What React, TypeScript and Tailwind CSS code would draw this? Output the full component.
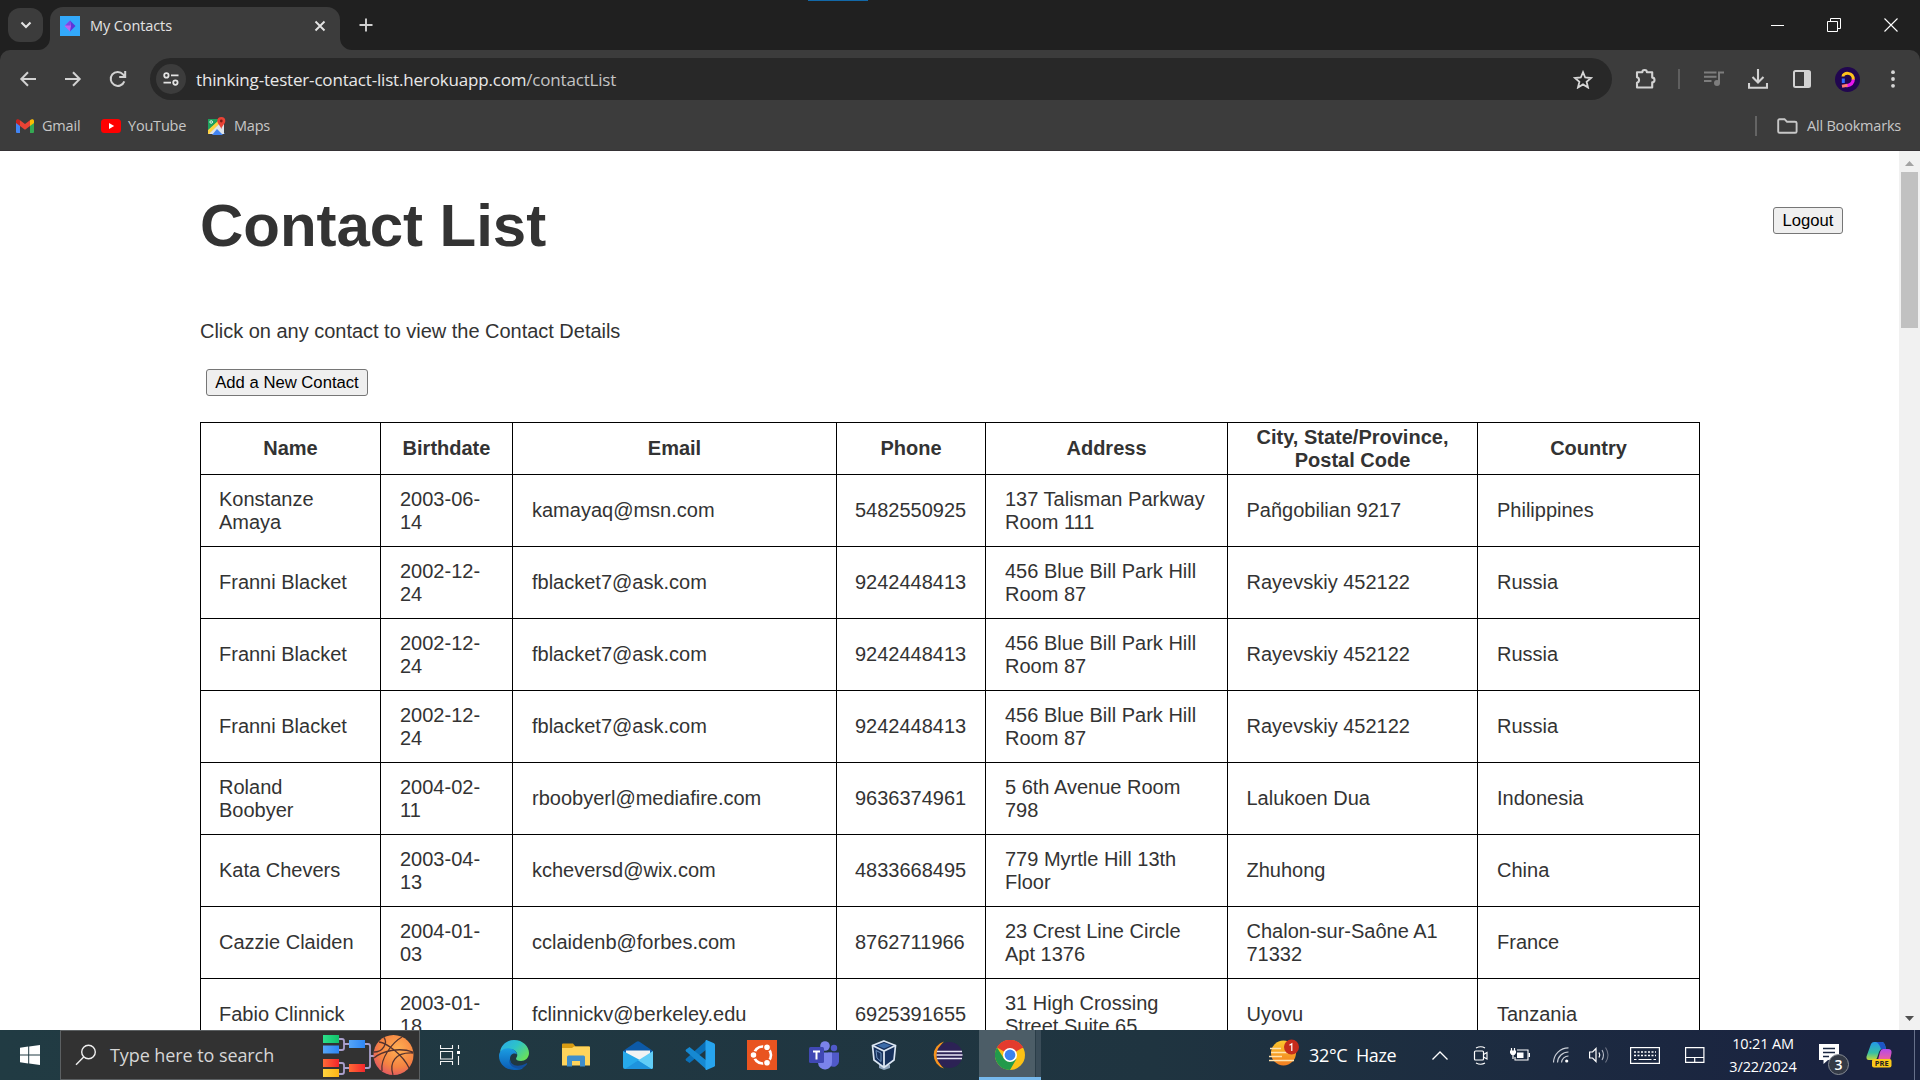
import React from "react";

const ui = "font-['Open_Sans','Noto_Sans',sans-serif]";

type SvgProps = { w: number; h: number; vb?: string; children: React.ReactNode; className?: string };
const Svg = ({ w, h, vb, children, className }: SvgProps) => (
  <svg width={w} height={h} viewBox={vb ?? `0 0 ${w} ${h}`} fill="none" className={`block shrink-0 ${className ?? ""}`}>
    {children}
  </svg>
);

const contacts = [
  ["Konstanze Amaya", "2003-06-14", "kamayaq@msn.com", "5482550925", "137 Talisman Parkway Room 111", "Pañgobilian 9217", "Philippines"],
  ["Franni Blacket", "2002-12-24", "fblacket7@ask.com", "9242448413", "456 Blue Bill Park Hill Room 87", "Rayevskiy 452122", "Russia"],
  ["Franni Blacket", "2002-12-24", "fblacket7@ask.com", "9242448413", "456 Blue Bill Park Hill Room 87", "Rayevskiy 452122", "Russia"],
  ["Franni Blacket", "2002-12-24", "fblacket7@ask.com", "9242448413", "456 Blue Bill Park Hill Room 87", "Rayevskiy 452122", "Russia"],
  ["Roland Boobyer", "2004-02-11", "rboobyerl@mediafire.com", "9636374961", "5 6th Avenue Room 798", "Lalukoen Dua", "Indonesia"],
  ["Kata Chevers", "2003-04-13", "kcheversd@wix.com", "4833668495", "779 Myrtle Hill 13th Floor", "Zhuhong", "China"],
  ["Cazzie Claiden", "2004-01-03", "cclaidenb@forbes.com", "8762711966", "23 Crest Line Circle Apt 1376", "Chalon-sur-Saône A1 71332", "France"],
  ["Fabio Clinnick", "2003-01-18", "fclinnickv@berkeley.edu", "6925391655", "31 High Crossing Street Suite 65", "Uyovu", "Tanzania"],
];
const headers = ["Name", "Birthdate", "Email", "Phone", "Address", "City, State/Province, Postal Code", "Country"];

function TitleBar() {
  return (
    <div className="flex h-[50px] bg-[#202020]">
      <div className="flex w-[50px] items-center pl-2">
        <div className="flex h-[34px] w-[35px] items-center justify-center rounded-xl bg-[#3c3c3c]">
          <Svg w={12} h={8}><path d="M1.5 1.5 6 6l4.500-4.500" stroke="#e3e3e3" strokeWidth="2.100" /></Svg>
        </div>
      </div>
      <div className="relative mt-[7px] flex h-[43px] w-[290px] items-center rounded-t-[13px] bg-[#3c3c3c] pb-[5px]">
        <Svg w={12} h={12} className="absolute -left-3 bottom-0"><path d="M0 12A12 12 0 0 0 12 0V12Z" fill="#3c3c3c" /></Svg>
        <Svg w={12} h={12} className="absolute -right-3 bottom-0"><path d="M12 12A12 12 0 0 1 0 0V12Z" fill="#3c3c3c" /></Svg>
        <Svg w={20} h={20} className="ml-[10px]">
          <rect width="20" height="20" fill="#33a9fb" />
          <path d="M10 4.500 15.500 10 10 15.500Z" fill="#5b35d8" />
          <path d="M10 4.500 4.500 10l5.500 5.500 1-5.500Z" fill="#c060f0" />
          <path d="M10 4.500 5 9.500h5.500Z" fill="#7a48e6" />
        </Svg>
        <span className="ml-[10px] w-[228px] text-[14.500px] leading-5 tracking-[-0.1px] whitespace-nowrap text-[#e3e3e3]">My Contacts</span>
        <Svg w={12} h={12} className="-ml-[4px]"><path d="M1.500 1.500l9 9m0-9-9 9" stroke="#e3e3e3" strokeWidth="1.900" /></Svg>
      </div>
      <div className="flex w-[51px] items-center justify-center">
        <Svg w={14} h={14}><path d="M7 .5v13M.5 7h13" stroke="#d0d0d0" strokeWidth="1.900" /></Svg>
      </div>
      <div className="ml-[417px] h-px w-[60px] bg-[#1268a8]" />
      <div className="ml-auto flex h-[50px] items-center pr-px">
        <div className="flex w-[56px] justify-center"><Svg w={13} h={14}><path d="M0 7.500h13" stroke="#fff" /></Svg></div>
        <div className="flex w-[57px] justify-center"><Svg w={14} h={14}><path d="M.5 3.500h10v10H.5zM3.500 3V.5h10v10H11" stroke="#fff" /></Svg></div>
        <div className="flex w-[57px] justify-center"><Svg w={14} h={14}><path d="m.5.5 13 13m0-13-13 13" stroke="#fff" strokeWidth="1.100" /></Svg></div>
      </div>
    </div>
  );
}

function Toolbar() {
  return (
    <div className="bg-[#202020]">
      <div className="flex h-[58px] items-center rounded-t-[10px] bg-[#3c3c3c]">
        <div className="flex w-[150px] items-center pl-[19px]">
          <Svg w={18} h={16}><path d="M9 1.200 2.300 8 9 14.800M2.300 8H17" stroke="#d2d2d2" strokeWidth="2" /></Svg>
          <Svg w={18} h={16} className="ml-[27px]"><path d="M9 1.200 15.700 8 9 14.800M15.700 8H1" stroke="#d2d2d2" strokeWidth="2" /></Svg>
          <Svg w={18} h={18} className="ml-[27px]"><path d="M15.300 11.300A7 7 0 1 1 14 4.300L16 6.500M16.200 1v6h-6" stroke="#d2d2d2" strokeWidth="2" /></Svg>
        </div>
        <div className="flex h-[42px] w-[1462px] items-center rounded-full bg-[#282828] pr-[19px] pl-[6px]">
          <div className="flex size-[30px] items-center justify-center rounded-full bg-[#3c3c3c]">
            <Svg w={16} h={14}>
              <circle cx="3.400" cy="3.400" r="2.200" stroke="#e3e3e3" strokeWidth="1.800" />
              <circle cx="12.400" cy="10.600" r="2.200" stroke="#e3e3e3" strokeWidth="1.800" />
              <path d="M8 3.400h7.500M.5 10.600H8" stroke="#e3e3e3" strokeWidth="1.900" />
            </Svg>
          </div>
          <span className="mt-px ml-[10px] text-[17px] tracking-[-0.18px] whitespace-nowrap text-[#e8e8e8]">thinking-tester-contact-list.herokuapp.com<span className="text-[#c4c4c4]">/contactList</span></span>
          <Svg w={20} h={19} className="ml-auto">
            <path d="m10 2.200 2.200 5.300 5.800.5-4.400 3.800 1.400 5.700-5-3.100-5 3.100 1.400-5.700L2 8l5.800-.5Z" stroke="#d6d6d6" strokeWidth="1.800" />
          </Svg>
        </div>
        <div className="flex w-[68px] justify-center">
          <Svg w={22} h={22}><path d="M2 4.300h5.300a2.300 2.300 0 0 1 4.600 0h5.300v5.300a2.300 2.300 0 0 1 0 4.600v5.300H2v-4.800a2.800 2.800 0 0 0 0-5.400Z" stroke="#d2d2d2" strokeWidth="2.100" strokeLinejoin="round" /></Svg>
        </div>
        <div className="-ml-[2px] h-5 w-[1.500px] bg-[#5f5f5f]" />
        <div className="ml-[12px] flex w-[44px] justify-center">
          <Svg w={20} h={16}><path d="M0 1.500h12.500M0 5.700h12.500M0 10h7.500" stroke="#7d7d7d" strokeWidth="1.900" /><circle cx="13" cy="12" r="3" fill="#7d7d7d" /><path d="M15 12V1.500h5" stroke="#7d7d7d" strokeWidth="2" /></Svg>
        </div>
        <div className="flex w-[44px] justify-center">
          <Svg w={20} h={20}><path d="M10 0v13M4.500 8l5.500 5.500L15.500 8M1 14v4.800h18V14" stroke="#d2d2d2" strokeWidth="2.100" /></Svg>
        </div>
        <div className="flex w-[45px] justify-center">
          <Svg w={18} h={18}><rect x="1" y="1" width="16" height="16" rx="1.500" stroke="#d2d2d2" strokeWidth="2" /><path d="M11 1h6v16h-6z" fill="#d2d2d2" /></Svg>
        </div>
        <div className="flex w-[45px] justify-center">
          <Svg w={25} h={25}>
            <circle cx="12.500" cy="12.500" r="12.500" fill="#21064f" />
            <path d="M8.300 11.500V16" stroke="#2f67ff" strokeWidth="3" />
            <path d="M18.300 12c0 4-3 6.300-7 6.800" stroke="#e815ef" strokeWidth="3.200" />
            <path d="M8 9.500c0-4.500 10.300-4.800 10.300 3" stroke="#ffc21c" strokeWidth="3" /><path d="M7 19.200l5.500-1" stroke="#ff7c70" strokeWidth="3" />
          </Svg>
        </div>
        <div className="flex w-[46px] justify-center">
          <Svg w={4} h={18}><circle cx="2" cy="2.200" r="1.900" fill="#d6d6d6" /><circle cx="2" cy="9" r="1.900" fill="#d6d6d6" /><circle cx="2" cy="15.800" r="1.900" fill="#d6d6d6" /></Svg>
        </div>
      </div>
    </div>
  );
}

function Bookmarks() {
  return (
    <div className="flex h-[43px] items-center border-b border-[#353235] bg-[#3c3c3c] pb-[7px] pl-4 text-[14.500px] tracking-[-0.2px] text-[#c7c7c7]">
      <Svg w={18} h={14}>
        <path d="M0 2.500V13a1 1 0 0 0 1 1h3V5Z" fill="#4285f4" /><path d="M18 2.500V13a1 1 0 0 1-1 1h-3V5Z" fill="#34a853" />
        <path d="M14 1.200V7l4-3V2c0-2-2.200-2.500-4-.8Z" fill="#fbbc04" /><path d="M0 2v2l4 3V1.200C2.200-.5 0 0 0 2Z" fill="#c5221f" /><path d="M4 1.200 9 5l5-3.800V7L9 10.800 4 7Z" fill="#ea4335" />
      </Svg>
      <span className="ml-[8px] w-[59px] whitespace-nowrap">Gmail</span>
      <Svg w={20} h={14}><rect width="20" height="14" rx="3.500" fill="#f00" /><path d="m8 4 5.200 3L8 10Z" fill="#fff" /></Svg>
      <span className="ml-[7px] w-[80px] whitespace-nowrap">YouTube</span>
      <Svg w={18} h={18}>
        <path d="M0 2h12v15H0z" fill="#1fa15d" /><path d="M1 17 9 8.500l8 8.500Z" fill="#4b87f0" /><path d="M0 17 16 2v15Z" fill="#dfe3e8" /><path d="m4 18 5-6 6 6Z" fill="#4285f4" />
        <path d="M0 12.500 10.500 3H12v3L1 17H0Z" fill="#ffd23f" /><path d="M0 2h12L0 13Z" fill="#1fa15d" /><path d="M13.300 0a4 4 0 0 1 4 4c0 2.800-2.800 4-4 8-1.200-4-4-5.200-4-8a4 4 0 0 1 4-4Z" fill="#ea4335" /><circle cx="13.300" cy="4" r="1.400" fill="#7e1d16" /><circle cx="3.200" cy="5" r="1.300" stroke="#e8f5ee" />
      </Svg>
      <span className="ml-[8px] whitespace-nowrap">Maps</span>
      <div className="ml-auto h-5 w-[2px] bg-[#646464]" />
      <Svg w={21} h={16} className="ml-5"><path d="M1.200 2.500c0-.8.500-1.300 1.300-1.300h5l2.500 2.500h8c1 0 1.600.6 1.600 1.400v8.300c0 .8-.6 1.400-1.400 1.400H2.600c-.8 0-1.400-.6-1.400-1.400Z" stroke="#c7c7c7" strokeWidth="1.900" /></Svg>
      <span className="mr-[18px] ml-[9px] w-[95px] whitespace-nowrap">All Bookmarks</span>
    </div>
  );
}

const btn = "h-[27px] rounded-[3px] border border-[#767676] bg-[#efefef] text-center text-[16.667px] leading-[25px] text-black whitespace-nowrap";

// Left padding of each table column
const cellPad = ["pl-[18px]", "pl-[19px]", "pl-[19px]", "pl-[18px]", "pl-[19px]", "pl-[18.500px]", "pl-[19px]"];

function Page() {
  return (
    <div className="flex h-[879px] overflow-hidden bg-white font-['Liberation_Sans',Arial,sans-serif] text-[#333]">
      <main className="flex-1 pl-[200px]">
        <div className="flex items-start justify-between pr-[56px]">
          <h1 className="mt-[40px] text-[60px] leading-[69px] font-bold tracking-[-0.05px]">Contact List</h1>
          <button className={`${btn} mt-[56px] w-[70px]`}>Logout</button>
        </div>
        <p className="mt-[60px] text-[20px] leading-[23px] tracking-[-0.02px]">Click on any contact to view the Contact Details</p>
        <button className={`${btn} mt-[26px] ml-[6px] block w-[162px]`}>Add a New Contact</button>
        <table className="mt-[26px] w-[1500px] table-fixed border-separate border-spacing-0 border-r border-black text-[20px] leading-[23px]">
          <colgroup>
            <col className="w-[180px]" /><col className="w-[132px]" /><col className="w-[324px]" /><col className="w-[149px]" /><col className="w-[242px]" /><col className="w-[250px]" /><col className="w-[222px]" />
          </colgroup>
          <thead>
            <tr className="h-[52px]">
              {headers.map((h) => <th key={h} className="border-t border-l border-black px-[18px] py-0 text-center align-middle font-bold">{h}</th>)}
            </tr>
          </thead>
          <tbody>
            {contacts.map((row, i) => (
              <tr key={i} className="h-[72px]">
                {row.map((c, j) => <td key={j} className={`border-t border-l border-black py-0 pr-[19px] align-middle ${cellPad[j]}`}>{c}</td>)}
              </tr>
            ))}
          </tbody>
        </table>
      </main>
      <div className="flex w-[21px] flex-col items-center bg-[#f1f1f1]">
        <Svg w={9} h={5} className="mt-[10px]"><path d="M4.500 0 9 5H0Z" fill="#a3a3a3" /></Svg>
        <div className="mt-[6px] h-[156px] w-[17px] bg-[#c1c1c1]" />
        <Svg w={9} h={5} className="mt-auto mb-[9px]"><path d="M4.500 5 9 0H0Z" fill="#505050" /></Svg>
      </div>
    </div>
  );
}

const Cell = ({ children, className }: { children: React.ReactNode; className?: string }) => (
  <div className={`flex h-[50px] w-[62px] shrink-0 items-center justify-center ${className ?? ""}`}>{children}</div>
);

function SearchBox() {
  return (
    <div className="flex h-[50px] w-[360px] items-center border border-[#5c6062] bg-[#323232]">
      <Svg w={22} h={22} className="ml-[14px]"><circle cx="13.500" cy="8" r="6.800" stroke="#f0f0f0" strokeWidth="1.400" /><path d="M8.700 13 1 20.700" stroke="#f0f0f0" strokeWidth="1.400" /></Svg>
      <span className="ml-[13px] w-[212px] text-[18px] tracking-[-0.08px] whitespace-nowrap text-[#d6d6d6]">Type here to search</span>
      <Svg w={92} h={44}>
        <defs>
          <radialGradient id="ball" cx=".6" cy=".35" r=".75"><stop offset="0" stopColor="#ffb052" /><stop offset=".6" stopColor="#f58342" /><stop offset="1" stopColor="#dd4f68" /></radialGradient>
          <linearGradient id="gr"><stop stopColor="#2be08a" /><stop offset="1" stopColor="#12c06a" /></linearGradient>
          <linearGradient id="bl"><stop stopColor="#55a5f7" /><stop offset="1" stopColor="#2d86f4" /></linearGradient>
          <linearGradient id="rd"><stop stopColor="#ff6a36" /><stop offset="1" stopColor="#f3262c" /></linearGradient>
          <linearGradient id="ye"><stop stopColor="#ffd33f" /><stop offset="1" stopColor="#fbb416" /></linearGradient>
        </defs>
        <path d="M17 6h3q2 0 2 2v7q0 2-2 2h-3M22 11h5M17 30h3q2 0 2 2v7q0 2-2 2h-3M22 35h5M43 11h3q2 0 2 2v20q0 2-2 2h-3M48 23h7" stroke="#a99fcb" strokeWidth="1.800" />
        <rect x="1" y="2" width="16" height="8" fill="url(#gr)" /><rect x="1" y="12.500" width="16" height="8" fill="url(#bl)" />
        <rect x="27" y="7" width="16" height="8" fill="url(#bl)" /><rect x="1" y="26" width="16" height="8" fill="url(#rd)" />
        <rect x="27" y="31" width="16" height="8" fill="url(#rd)" /><rect x="1" y="36" width="16" height="8" fill="url(#ye)" />
        <circle cx="71.500" cy="22" r="20" fill="url(#ball)" />
        <path d="M62 4.500C66 10 61 19 52 19M57 9c8 1 24 13 30 26M52 25c8-7 25-11 39-6M80 4c-9 5-22 21-20 34M71 42c-4-12 2-23 20-22" stroke="#54322e" strokeWidth="1.300" />
      </Svg>
    </div>
  );
}

function TaskIcons() {
  return (
    <div className="flex">
      <Cell>
        <Svg w={30} h={30}>
          <defs>
            <linearGradient id="e1" x1="0" y1="0" x2="1" y2=".7"><stop stopColor="#2ba7ea" /><stop offset=".5" stopColor="#2dc3c9" /><stop offset="1" stopColor="#69e05a" /></linearGradient>
            <linearGradient id="e2" x1="0" y1="0" x2="0" y2="1"><stop stopColor="#1b9de2" /><stop offset="1" stopColor="#0b5cb5" /></linearGradient>
          </defs>
          <path d="M1 12C2 5 8 0 15 0c9 0 15 6.500 15 13 0 5-4 8-8 8-5 0-5.500-2-4.500-3.500C20 13.500 16 9 11 9c-4 0-8 1.500-10 3Z" fill="url(#e1)" />
          <path d="M0 16C0 11 5 7.500 11 8.500c4 .5 6.500 3 7 6-2-2-7-1-7 4.500 0 6 6 10 12 8.500 1 0 1.500 0 1 .5C22 30 18.500 30 15 30 7 30 0 24 0 16Z" fill="url(#e2)" />
          <path d="M11 19c0 6 7 9 16 4.500 1-.5 1.500 0 1 .7C26 27 23 28.500 20 28.800 12 28 9 23 11 19Z" fill="#134f9d" />
        </Svg>
      </Cell>
      <Cell>
        <Svg w={28} h={24}><path d="M0 1.500Q0 .5 1 .5h10l2.500 3H27q1 0 1 1V22H0Z" fill="#d99c12" /><path d="M0 5h10l2-1.500h15q1 0 1 1V22.500H0Z" fill="#ffd45b" /><path d="M5 23.500V14q0-1.500 1.500-1.500h15q1.500 0 1.500 1.500v9.500h-5V18h-8v5.500Z" fill="#3f8ecb" /></Svg>
      </Cell>
      <Cell>
        <Svg w={30} h={28}><path d="M0 10 13.500.8q1.500-1 3 0L30 10v6H0Z" fill="#0d5aa8" /><path d="M3 9.500h24v10H3z" fill="#f3f3f3" /><path d="M0 10v16q0 2 2 2h26q2 0 2-2Z" fill="#27a9ea" /><path d="M30 10 15 19.500 28.500 28q1.500 0 1.500-2Z" fill="#61cdf7" /><path d="m15 19.500 13.500 8.500H2Z" fill="#1e93dc" /></Svg>
      </Cell>
      <Cell>
        <Svg w={30} h={30}><path d="M22 0v9L4.500 23 1 20.500q-1-.8 0-1.800Z" fill="#0a70b8" /><path d="M22 30v-9L4.500 7 1 9.500q-1 .8 0 1.800Z" fill="#1689d2" /><path d="M21.500 0 29 3.200q1 .5 1 1.500v20.600q0 1-1 1.500L21.500 30c-.8 0-1-.5-1-1V1q0-1 1-1Z" fill="#27a4ee" /></Svg>
      </Cell>
      <Cell>
        <Svg w={30} h={30}><rect width="30" height="30" fill="#e95420" /><circle cx="15.500" cy="15" r="8.500" stroke="#fff" strokeWidth="2.600" />{[[6.500, 15], [20, 7.300], [20, 22.700]].map(([x, y]) => <circle key={y} cx={x} cy={y} r="3.400" fill="#fff" stroke="#e95420" strokeWidth="1.200" />)}</Svg>
      </Cell>
      <Cell>
        <Svg w={30} h={30}><circle cx="25" cy="8" r="3.200" fill="#5059c9" /><path d="M19 12.500h11V21a5.500 5.500 0 0 1-9 4.500Z" fill="#5059c9" /><circle cx="16" cy="6" r="4.800" fill="#7b83eb" /><path d="M9 12.500h14V22a7 7 0 0 1-14 1Z" fill="#7b83eb" /><rect y="7" width="15" height="16" rx="1.500" fill="#4048b4" /><path d="M4 11.500h7M7.500 11.500v8" stroke="#fff" strokeWidth="2" /></Svg>
      </Cell>
      <Cell className="pr-[4px]">
        <Svg w={26} h={30}><path d="M8 25 12 22l7 3v3l-6 2-5-2Z" fill="#8fa4bd" /><path d="M13 1 24.500 5.500 23 20l-10 7.500L3 20 1.500 5.500Z" fill="#17315c" stroke="#dbe6f2" strokeWidth="1.700" /><path d="M1.500 5.500 13 11l11.500-5.500M13 11v16" stroke="#dbe6f2" strokeWidth="1.800" /><path d="M6 5.500 13 3l7 2.500-7 3Z" fill="#3b6ba8" /><path d="M5 10.500 10 13v8.500L6 18Z" stroke="#6f93bf" /></Svg>
      </Cell>
      <Cell>
        <Svg w={30} h={30}><path d="M11 1.500a14 14 0 0 0 0 27A18 18 0 0 1 11 1.500Z" fill="#f7941e" /><circle cx="16.500" cy="15" r="13" fill="#2c2255" /><path d="M4 11.500h25M3.500 15h26M4 18.500h25" stroke="#e9e6f5" strokeWidth="1.700" /></Svg>
      </Cell>
      <div className="flex h-[50px] w-[62px] border-b-[3px] border-[#76b9ed]">
        <div className="flex w-[57px] items-center justify-center border-r border-[#2a3d48] bg-[#4c5d67] pt-[3px] pl-[5px]">
          <Svg w={30} h={30}><circle cx="15" cy="15" r="15" fill="#fbc116" /><path d="M15 15 2 7.500A15 15 0 0 1 28 7.500Z" fill="#e33b2e" /><path d="M15 8h13.300A15 15 0 0 0 2 7.500Z" fill="#e33b2e" /><path d="M2 7.500a15 15 0 0 0 13 22.500l6.500-11.300L15 22 8.900 18.500Z" fill="#229a4b" /><circle cx="15" cy="15" r="7" fill="#fff" /><circle cx="15" cy="15" r="5.400" fill="#3b82f0" /></Svg>
        </div>
        <div className="flex-1 bg-[#3a4c58]" />
      </div>
    </div>
  );
}

function Taskbar() {
  return (
    <div className="flex h-[50px] items-center bg-linear-to-r from-[#213b43] from-0% via-[#1f3440] via-60% to-[#1a2340] to-95% text-white">
      <div className="flex w-[60px] justify-center">
        <Svg w={20} h={20}><path d="M0 2.700 8.200 1.600v7.900H0ZM9.200 1.500 20 0v9.500H9.200ZM0 10.500h8.200v7.900L0 17.300ZM9.200 10.500H20V20L9.200 18.500Z" fill="#fff" /></Svg>
      </div>
      <SearchBox />
      <div className="flex w-[63px] pl-5">
        <Svg w={21} h={20}><path d="M.5 0v3.500h12V0M.5 20v-3.500h12V20M.5 6.500h12v7.500H.5ZM18.500 0v4M18.500 11v9" stroke="#f2f2f2" strokeWidth="1.100" /><rect x="17" y="6" width="3" height="3" fill="#fff" /></Svg>
      </div>
      <TaskIcons />
      <div className="flex flex-1 items-center pl-[228px]">
        <Svg w={30} h={30} className="-mt-[4px]">
          <defs><linearGradient id="sun" x1="0" y1="0" x2="0" y2="1"><stop stopColor="#fbc62c" /><stop offset="1" stopColor="#f27e22" /></linearGradient></defs>
          <circle cx="14.500" cy="15" r="12.500" fill="url(#sun)" /><path d="M1 10.500h11M2 14.500h17M0 18.500h13M0 22.500h25" stroke="#ffe2ad" strokeWidth="1.500" />
          <circle cx="22.500" cy="9" r="7.500" fill="#c42b1c" /><path d="m20.500 7.300 2.300-1.500V13" stroke="#fff" strokeWidth="1.200" />
        </Svg>
        <span className="ml-[10px] w-[117px] text-[18px] tracking-[-0.35px] whitespace-pre">32°C  Haze</span>
        <Svg w={16} h={9} className="ml-[6px]"><path d="m.5 8.500 7.500-7.500 7.500 7.500" stroke="#fff" strokeWidth="1.300" /></Svg>
        <Svg w={16} h={19} className="ml-[25px]"><rect x="1.500" y="5" width="9" height="9" rx="1" stroke="#fff" strokeWidth="1.200" /><path d="m10.500 8.500 3.500-2v6.500l-3.500-2M3 2Q8-.5 12 2M3 17q5 2.500 9 0" stroke="#fff" strokeWidth="1.100" /></Svg>
        <Svg w={21} h={14} className="ml-[21px]"><path d="M7 2h11v10H5V9" stroke="#fff" strokeWidth="1.100" /><path d="M7 4.500h6.500v5.500H7zM18.500 5H20v4h-1.500z" fill="#fff" /><path d="M1.500 0v3M4.500 0v3M3 6v5" stroke="#fff" strokeWidth="1.200" /><path d="M0 2.500h6V5L4.500 7h-3L0 5Z" fill="#fff" /></Svg>
        <Svg w={16} h={16} className="ml-[22px]"><path d="M.5 15.500A15 15 0 0 1 15.500.8M4.500 15.500a11 11 0 0 1 11-10.500M8.500 15.500a7 7 0 0 1 7-6.500" stroke="#c9ced6" strokeWidth="1.200" /><circle cx="13.700" cy="14" r="1.600" fill="#fff" /></Svg>
        <Svg w={21} h={18} className="ml-[20px]"><path d="M.6 6h3L7 2.500v13L3.600 12h-3Z" stroke="#fff" strokeWidth="1.200" /><path d="M10 6.500q1.500 2.500 0 5" stroke="#fff" strokeWidth="1.200" /><path d="M13 4q3 5 0 10" stroke="#b7bcc8" strokeWidth="1.100" /><path d="M16.500 1.500q5 7.500 0 15" stroke="#6d7486" strokeWidth="1.100" /></Svg>
        <Svg w={30} h={17} className="ml-[20px]"><rect x=".6" y=".6" width="28.800" height="15.800" stroke="#fff" strokeWidth="1.200" /><path d="M4 5h22M4 8.500h22" stroke="#fff" strokeWidth="1.500" strokeDasharray="2 1.500" /><path d="M4 12.500h2.500M8.500 12.500h13M23.500 12.500H26" stroke="#fff" strokeWidth="1.200" /></Svg>
        <Svg w={20} h={16} className="ml-[25px]"><path d="M.6.6h18.300v14.800H.6ZM.6 10.500h18.300M9.700 10.500v5" stroke="#fff" strokeWidth="1.200" /></Svg>
        <div className="ml-[18px] w-[80px] text-center text-[14.500px] leading-[23px] tracking-[-0.15px] whitespace-nowrap"><div>10:21 AM</div><div>3/22/2024</div></div>
        <div className="relative ml-[16px] size-[20px]">
          <Svg w={20} h={20} className="-mt-[1px]"><path d="M0 0h20v16H9l-4.500 4V16H0Z" fill="#fff" /><path d="M4 4.500h12M4 8.500h12M4 12.500h6" stroke="#1a2740" strokeWidth="1.300" /></Svg>
          <div className="absolute top-[9px] left-[9px] flex size-[21px] items-center justify-center rounded-full border border-[#868b93] bg-[#343a46] text-[14px] leading-none font-semibold">3</div>
        </div>
        <Svg w={26} h={26} className="ml-[27px]">
          <defs><linearGradient id="c1" x1="0" y1="0" x2="0" y2="1"><stop stopColor="#2498e8" /><stop offset=".6" stopColor="#36bfa5" /><stop offset="1" stopColor="#c6d838" /></linearGradient><linearGradient id="c2" x1="0" y1="0" x2="0" y2="1"><stop stopColor="#b64be8" /><stop offset="1" stopColor="#f0609a" /></linearGradient></defs>
          <path d="M5 2Q6 0 8 0h8q2 0 3 3l1 4h-4q-2 0-3 3l-2 6q-.5 2-3 2H3q-3 0-2.500-3.500Z" fill="url(#c1)" /><path d="M10 0h6q2 0 3 3l1 4h-5Q13 1 10 0Z" fill="#1d55c6" /><path d="M17 7h5q4 0 3.500 4L24 18H12l2-8q1-3 3-3Z" fill="url(#c2)" />
          <rect x="6" y="17" width="19.500" height="8.500" rx="2" fill="#fbc91b" />
          <text x="15.800" y="24" textAnchor="middle" fontSize="7.500" fontWeight="700" fill="#222" fontFamily="Open Sans">PRE</text>
        </Svg>
      </div>
      <div className="mr-[5px] h-[50px] w-px bg-[#66708a]" />
    </div>
  );
}

export default function App() {
  return (
    <div className={`h-[1080px] w-[1920px] overflow-hidden ${ui}`}>
      <TitleBar />
      <Toolbar />
      <Bookmarks />
      <Page />
      <Taskbar />
    </div>
  );
}
